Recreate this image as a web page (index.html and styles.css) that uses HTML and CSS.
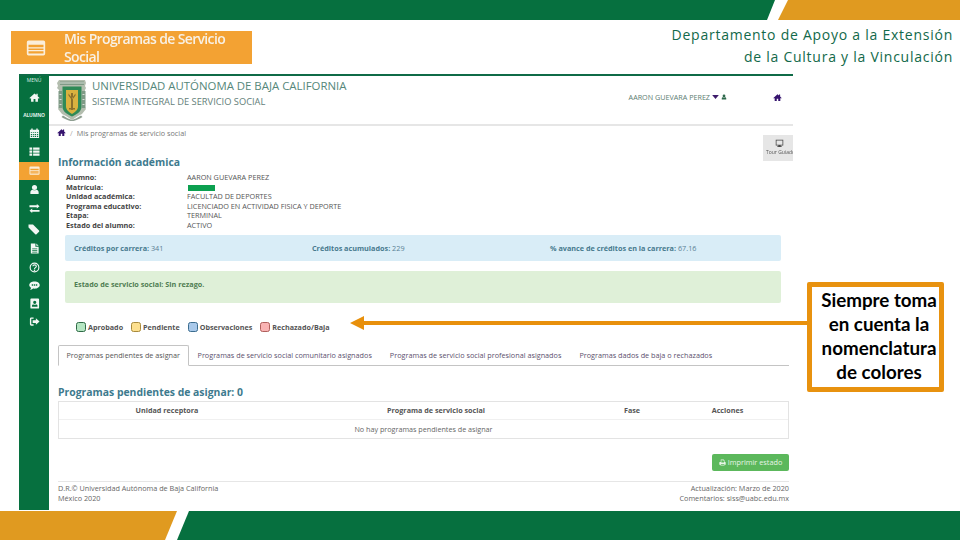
FILE: index.html
```html
<!DOCTYPE html>
<html lang="es">
<head>
<meta charset="utf-8">
<title>Mis Programas de Servicio Social</title>
<link rel="stylesheet" href="styles.css">
</head>
<body>
<svg class="defs" width="0" height="0" aria-hidden="true">
  <symbol id="i-home" viewBox="0 0 24 24"><path d="M12 3 1 13l1.5 1.6L4.500 13v8h5.500v-6h4v6h5.500v-8l2 1.600L23 13l-4-3.600V4h-3v2.700z"/></symbol>
  <symbol id="i-user" viewBox="0 0 24 24"><circle cx="12" cy="7.500" r="5.500"/><path d="M3 22v-4c0-3.500 2.500-5.500 5-5.500 2.500 1.700 5.500 1.700 8 0 2.500 0 5 2 5 5.500v4z"/></symbol>
  <symbol id="i-card" viewBox="0 0 24 24"><path fill-rule="evenodd" d="M3 3h18a2 2 0 0 1 2 2v14a2 2 0 0 1-2 2H3a2 2 0 0 1-2-2V5a2 2 0 0 1 2-2zm0 5v3h18V8zm0 4.500v2h18v-2zm0 3.500v2.500h18V16z"/></symbol>
</svg>
<div class="slide">
  <svg class="band band-top" viewBox="0 0 960 20" preserveAspectRatio="none" aria-hidden="true">
    <polygon class="fill-green" points="0,0 775,0 767,20 0,20"/>
    <polygon class="fill-gold" points="788,0 960,0 960,20 778,20"/>
  </svg>
  <header class="slide-head">
    <div class="banner">
      <svg class="banner-icon"><use href="#i-card"/></svg>
      <div class="banner-text">Mis Programas de Servicio Social</div>
    </div>
    <div class="dept">Departamento de Apoyo a la Extensión<br>de la Cultura y la Vinculación</div>
  </header>

  <section class="app">
    <nav class="side">
      <div class="side-label side-menu">MENÚ</div>
      <div class="side-home"><svg class="side-icon"><use href="#i-home"/></svg></div>
      <div class="side-label side-alumno">ALUMNO</div>
      <ul class="side-list">
        <li class="side-item"><svg class="side-icon" viewBox="0 0 24 24"><path fill-rule="evenodd" d="M5 1h3v3h8V1h3v3h3v18H2V4h3zM4 9v2h3V9zm5 0v2h2.500V9zm4 0v2h2.500V9zm4.500 0v2H20V9zM4 13v2h3v-2zm5 0v2h2.500v-2zm4 0v2h2.500v-2zm4.500 0v2H20v-2zM4 17v2.500h3V17zm5 0v2.500h2.500V17zm4 0v2.500h2.500V17zm4.500 0v2.500H20V17z"/></svg></li>
        <li class="side-item"><svg class="side-icon" viewBox="0 0 24 24"><path d="M1 3h6v5H1zm8 0h14v5H9zM1 10h6v4.500H1zm8 0h14v4.500H9zM1 16.500h6V21H1zm8 0h14V21H9z"/></svg></li>
        <li class="side-item side-active"><svg class="side-icon"><use href="#i-card"/></svg></li>
        <li class="side-item"><svg class="side-icon"><use href="#i-user"/></svg></li>
        <li class="side-item"><svg class="side-icon" viewBox="0 0 24 24"><path d="M17 2l6 5-6 5V9H1V5h16zM7 12v3h16v4H7v3l-6-5z"/></svg></li>
        <li class="side-item side-gap"><svg class="side-icon side-tag" viewBox="0 0 24 24"><path d="M1 3h9l12 12a2 2 0 0 1 0 2.500l-5 5a2 2 0 0 1-2.500 0L2.500 10.500C1.500 9.500 1 9 1 8z"/></svg></li>
        <li class="side-item"><svg class="side-icon" viewBox="0 0 24 24"><path fill-rule="evenodd" d="M4 1h10v7h7v15H4zm12 0 5 5h-5zM7 12v1.500h11V12zm0 3.500V17h11v-1.500zm0 3.500v1.500h11V19z"/></svg></li>
        <li class="side-item"><svg class="side-icon" viewBox="0 0 24 24"><circle class="ico-ring" cx="12" cy="12" r="9.500"/><path class="ico-ring" d="M8.500 9.500c0-4.500 7.500-4.500 7.500 0 0 3-4 2.500-4 5.500"/><rect x="10.500" y="16.500" width="3" height="3"/></svg></li>
        <li class="side-item side-tight"><svg class="side-icon" viewBox="0 0 24 24"><path fill-rule="evenodd" d="M12 3c6.500 0 11.500 3.500 11.500 8S18.500 19 12 19c-1 0-2 0-3-.2C7 20.500 4.500 21.500 2 21.500c1.500-1.500 2.500-3 2.700-4.700C2 15.500.5 13.500.5 11 .5 6.500 5.500 3 12 3zM6 9.500v3h3v-3zm4.500 0v3h3v-3zm4.500 0v3h3v-3z"/></svg></li>
        <li class="side-item side-tight"><svg class="side-icon" viewBox="0 0 24 24"><path fill-rule="evenodd" d="M5 1h15a2 2 0 0 1 2 2v18a2 2 0 0 1-2 2H5a2 2 0 0 1-2-2V3a2 2 0 0 1 2-2zm7.500 5a3.500 3.500 0 1 0 0 7 3.500 3.500 0 0 0 0-7zM6.500 19h12v-2c0-2-1.500-3-3-3-1.800 1-4.200 1-6 0-1.500 0-3 1-3 3z"/></svg></li>
        <li class="side-item side-tight"><svg class="side-icon" viewBox="0 0 24 24"><path d="M10 3H5a3 3 0 0 0-3 3v12a3 3 0 0 0 3 3h5v-3H5V6h5zM15 5l8 7-8 7v-4H8V9h7z"/></svg></li>
      </ul>
    </nav>

    <div class="main">
      <header class="app-head">
        <svg class="crest" viewBox="0 0 30 42" aria-hidden="true">
          <path fill="#b3bdae" d="M2 1h26l1 3-1 3 1 2-1 2v17l1 2-4 5-4 2-6 4-6-4-4-2-4-5 1-2V11L0 9l1-2-1-3z"/>
          <path fill="#7f9a86" d="M3 2.500h24V6H3zM1.500 12H5v17H1.500zM25 12h3.500v17H25z"/>
          <path fill="#d8ded6" d="M3 3.500h24v1H3zM2.500 15h2v1h-2zM2.500 20h2v1h-2zM2.500 25h2v1h-2zM25.500 15h2v1h-2zM25.500 20h2v1h-2zM25.500 25h2v1h-2z"/>
          <path fill="#2f8a57" d="M5.500 7.500h19V28c0 4.500-5 7.500-9.500 9.500C10.500 35.500 5.500 32.500 5.500 28z"/>
          <path fill="#d9b23f" d="M9 11h12v16.500c0 3.500-3 5.500-6 7.500-3-2-6-4-6-7.500z"/>
          <path fill="#8a6f2c" d="M14 14h2v17h-2zM11.500 14.500l3 4v2l-3-4zM18.500 14.500l-3 4v2l3-4zM12 29h6v1.500h-6z"/>
          <path fill="#8f9f92" d="M6 36.500c3 2 6 3.500 9 4.500 3-1 6-2.500 9-4.500l1.500 1.500c-3 2-7 3.500-10.500 4.500C11.500 41.500 7.500 40 4.500 38z"/>
        </svg>
        <div class="app-titles">
          <div class="app-title">UNIVERSIDAD AUTÓNOMA DE BAJA CALIFORNIA</div>
          <div class="app-sub">SISTEMA INTEGRAL DE SERVICIO SOCIAL</div>
        </div>
        <div class="app-user">
          <span>AARON GUEVARA PEREZ</span>
          <svg class="caret" viewBox="0 0 10 6"><path d="M0 0h10L5 6z"/></svg>
          <svg class="user-icon"><use href="#i-user"/></svg>
        </div>
        <svg class="home-purple"><use href="#i-home"/></svg>
      </header>

      <div class="crumb">
        <svg class="crumb-home"><use href="#i-home"/></svg>
        <span class="crumb-sep">/</span>
        <span>Mis programas de servicio social</span>
      </div>

      <div class="tour">
        <svg class="tour-icon" viewBox="0 0 24 24"><path fill-rule="evenodd" d="M2 2h20v15h-7v2h3v2H6v-2h3v-2H2zm2 2v11h16V4z"/></svg>
        <span class="tour-text">Tour Guiado</span>
      </div>

      <div class="content">
        <h2 class="h-info">Información académica</h2>
        <dl class="facts">
          <dt>Alumno:</dt><dd>AARON GUEVARA PEREZ</dd>
          <dt>Matrícula:</dt><dd><span class="redacted"></span></dd>
          <dt>Unidad académica:</dt><dd>FACULTAD DE DEPORTES</dd>
          <dt>Programa educativo:</dt><dd>LICENCIADO EN ACTIVIDAD FISICA Y DEPORTE</dd>
          <dt>Etapa:</dt><dd>TERMINAL</dd>
          <dt>Estado del alumno:</dt><dd>ACTIVO</dd>
        </dl>

        <div class="alert alert-info">
          <div class="credit credit-a"><b>Créditos por carrera:</b> 341</div>
          <div class="credit credit-b"><b>Créditos acumulados:</b> 229</div>
          <div class="credit"><b>% avance de créditos en la carrera:</b> 67.16</div>
        </div>
        <div class="alert alert-ok"><b>Estado de servicio social: Sin rezago.</b></div>

        <div class="legend">
          <span class="legend-item"><i class="sw sw-g"></i>Aprobado</span>
          <span class="legend-item"><i class="sw sw-y"></i>Pendiente</span>
          <span class="legend-item"><i class="sw sw-b"></i>Observaciones</span>
          <span class="legend-item"><i class="sw sw-r"></i>Rechazado/Baja</span>
        </div>

        <div class="tabs">
          <span class="tab tab-active">Programas pendientes de asignar</span>
          <span class="tab">Programas de servicio social comunitario asignados</span>
          <span class="tab">Programas de servicio social profesional asignados</span>
          <span class="tab">Programas dados de baja o rechazados</span>
        </div>

        <h2 class="h-pend">Programas pendientes de asignar: 0</h2>
        <div class="table">
          <div class="t-row t-head">
            <div>Unidad receptora</div>
            <div>Programa de servicio social</div>
            <div>Fase</div>
            <div>Acciones</div>
          </div>
          <div class="t-empty">No hay programas pendientes de asignar</div>
        </div>

        <div class="print-row">
          <span class="print-btn">
            <svg class="print-icon" viewBox="0 0 24 24"><path fill-rule="evenodd" d="M6 2h10l3 3v5h2a2 2 0 0 1 2 2v8h-4v2H5v-2H1v-8a2 2 0 0 1 2-2h3zm2 2v8h9V6h-2V4zM7 17v3h11v-3z"/></svg>Imprimir estado
          </span>
        </div>

        <footer class="foot">
          <div>D.R.© Universidad Autónoma de Baja California<br>México 2020</div>
          <div class="foot-right">Actualización: Marzo de 2020<br>Comentarios: siss@uabc.edu.mx</div>
        </footer>
      </div>
    </div>
  </section>

  <svg class="band band-bottom" viewBox="0 0 960 29" preserveAspectRatio="none" aria-hidden="true">
    <polygon class="fill-gold" points="0,0 177,0 165,29 0,29"/>
    <polygon class="fill-green" points="189,0 960,0 960,29 177,29"/>
  </svg>

  <svg class="arrow" viewBox="0 0 460 16" aria-hidden="true">
    <polygon points="0,8 14,1 14,6 460,6 460,10 14,10 14,15"/>
  </svg>
  <div class="callout">Siempre toma en cuenta la nomenclatura de colores</div>
</div>
</body>
</html>
```

FILE: styles.css
```css
* { box-sizing: border-box; }
html, body { margin: 0; padding: 0; background: #fff; }
.defs { position: absolute; }
.slide {
  position: relative;
  width: 960px;
  height: 540px;
  overflow: hidden;
  background: #fff;
  font-family: "Open Sans", sans-serif;
  display: flex;
  flex-direction: column;
}
.band { display: block; flex: none; width: 960px; }
.band-top { height: 20px; }
.band-bottom { height: 29px; margin-top: 1px; }
.fill-green { fill: #06703f; }
.fill-gold { fill: #e09a20; }

.slide-head {
  flex: none;
  height: 54px;
  display: flex;
  justify-content: space-between;
  align-items: flex-start;
  padding: 4px 7px 0 11px;
}
.banner {
  width: 241px;
  height: 33px;
  margin-top: 7px;
  background: #f3a233;
  display: flex;
  align-items: center;
  color: #fff;
  filter: blur(.3px);
}
.banner-icon { width: 20px; height: 20px; margin-left: 15px; fill: #fbeeda; flex: none; }
.banner-text { margin-left: 18px; width: 175px; font-size: 14px; font-weight: 600; line-height: 18px; letter-spacing: -.65px; color: #f8f1e6; }
.dept {
  font-size: 14px;
  line-height: 22px;
  letter-spacing: .75px;
  text-align: right;
  color: #12694a;
}

.app {
  flex: none;
  margin-left: 19px;
  width: 774px;
  height: 436px;
  border-top: 2px solid #0f6b47;
  display: flex;
  overflow: hidden;
}
.side {
  flex: none;
  width: 30px;
  background: #06703f;
  color: #fff;
  text-align: center;
}
.side-label { font-size: 5px; font-weight: 700; line-height: 9px; color: #dfeee6; }
.side-menu { height: 9px; font-weight: 400; }
.side-home { height: 24px; display: flex; align-items: center; justify-content: center; }
.side-alumno { height: 15px; line-height: 12px; letter-spacing: -.2px; }
.side-icon { width: 11px; height: 11px; fill: #f2f7f4; display: block; filter: blur(.25px); }
.side-tag { width: 12px; height: 12px; }
.ico-ring { fill: none; stroke: #f2f7f4; stroke-width: 2.500; }
.side-list { list-style: none; margin: 0; padding: 0; display: flex; flex-direction: column; gap: .9px; }
.side-item { height: 18px; display: flex; align-items: center; justify-content: center; }
.side-gap { margin-top: 2px; }
.side-tight { margin-top: -.9px; }
.side-active { background: #f3a233; }
.side-active .side-icon { fill: #fbeeda; }

.main { position: relative; flex: 1; min-width: 0; background: #fff; color: #555; filter: blur(.3px); }
.app-head {
  height: 50px;
  border-bottom: 2px solid #e6e6e6;
  display: flex;
  align-items: flex-start;
  padding: 3px 11px 0 8px;
}
.crest { width: 30px; height: 42px; flex: none; }
.app-titles { margin-left: 5px; flex: 1; }
.app-title { font-size: 11.400px; line-height: 14px; color: #55877a; white-space: nowrap; }
.app-sub { font-size: 9.300px; line-height: 12px; margin-top: 3px; color: #64807a; white-space: nowrap; }
.app-user { display: flex; align-items: center; gap: 2px; margin-top: 13px; font-size: 7.200px; line-height: 10px; color: #5d7d72; }
.caret { width: 7px; height: 4px; fill: #3d1b6b; }
.user-icon { width: 6px; height: 6px; fill: #2f6a4d; }
.home-purple { width: 9px; height: 9px; margin: 14px 0 0 46px; fill: #35136e; flex: none; }

.crumb {
  height: 13px;
  padding-left: 8px;
  display: flex;
  align-items: center;
  font-size: 7.250px;
  color: #777;
  white-space: nowrap;
}
.crumb-home { width: 9px; height: 9px; fill: #35136e; }
.crumb-sep { margin: 0 4px 0 4px; color: #aaa; }

.tour {
  position: absolute;
  top: 59px;
  right: -5px;
  width: 35px;
  height: 26px;
  background: #e6e6e6;
  display: flex;
  flex-direction: column;
  align-items: center;
  padding-top: 4px;
  font-size: 5px;
  color: #555;
}
.tour-icon { width: 9px; height: 9px; fill: #444; flex: none; margin-right: 3px; }
.tour-text { white-space: nowrap; margin-top: 1px; line-height: 7px; }

.content { padding: 0 4px 0 9px; }
.h-info, .h-pend { margin: 0; font-size: 10.400px; line-height: 14px; font-weight: 700; color: #3d7a8e; }
.h-info { margin-top: 16px; }
.facts {
  margin: 4px 0 0 8px;
  display: grid;
  grid-template-columns: 121px 1fr;
  grid-auto-rows: 9.600px;
  font-size: 7.250px;
  line-height: 9.600px;
  color: #555;
}
.facts dt { font-weight: 700; color: #444; }
.facts dd { margin: 0; }
.redacted { display: inline-block; width: 27px; height: 6px; background: #0ca050; margin-left: 1px; vertical-align: -1px; }

.alert { width: 716px; margin-left: 7px; border-radius: 2px; display: flex; align-items: center; font-size: 7.250px; padding-left: 9px; }
.alert-info { height: 26px; margin-top: 4px; background: #d9edf7; color: #5a7f95; }
.alert-info b { color: #477a8e; }
.alert-ok { height: 32px; margin-top: 10px; background: #dff0d8; color: #4f7d52; padding-bottom: 5px; }
.credit-a { width: 238px; }
.credit-b { width: 238px; }

.legend { display: flex; margin: 18px 0 0 18px; height: 12px; align-items: center; font-size: 7.200px; font-weight: 700; color: #555; gap: 8px; }
.legend-item { display: flex; align-items: center; gap: 2px; }
.sw { width: 10px; height: 10px; border-radius: 2.500px; border: 1px solid; display: block; }
.sw-g { background: #b5e6c2; border-color: #2f6b47; }
.sw-y { background: #fde08f; border-color: #a88a3c; }
.sw-b { background: #a9c9ea; border-color: #3c6d8f; }
.sw-r { background: #f9b3b3; border-color: #b0605d; }

.tabs { display: flex; margin-top: 12px; height: 21px; border-bottom: 1px solid #c4c4c4; font-size: 7.250px; color: #5b4f6e; white-space: nowrap; }
.tab { padding: 0 9px; line-height: 20px; height: 21px; }
.tab-active { border: 1px solid #c4c4c4; border-bottom-color: #fff; border-radius: 2px 2px 0 0; background: #fff; color: #555; padding: 0 7.500px; line-height: 19px; }

.h-pend { margin-top: 19px; }
.table { margin-top: 2px; border: 1px solid #e3e3e3; font-size: 7.200px; }
.t-row { display: grid; grid-template-columns: 216px 322px 70px 1fr; height: 18px; align-items: center; text-align: center; }
.t-head { font-weight: 700; color: #555; border-bottom: 1px solid #f0f0f0; }
.t-empty { height: 18px; line-height: 18px; text-align: center; color: #666; }

.print-row { display: flex; justify-content: flex-end; margin-top: 15px; }
.print-btn { display: flex; align-items: center; justify-content: center; gap: 2px; width: 77px; height: 17px; background: #5cb85c; border-radius: 2px; color: #e8f5e8; font-size: 7.300px; }
.print-icon { width: 7px; height: 7px; fill: #e8f5e8; }

.foot { display: flex; justify-content: space-between; margin-top: 10px; border-top: 1px solid #e6e6e6; padding-top: 1px; font-size: 7.250px; line-height: 10px; color: #666; }
.foot-right { text-align: right; }

.arrow { position: absolute; left: 350px; top: 315px; width: 460px; height: 16px; fill: #e8900c; }
.callout {
  position: absolute;
  left: 807px;
  top: 282px;
  width: 137px;
  height: 110px;
  border: 5px solid #e8920f;
  border-radius: 2px;
  background: #fff;
  padding: 1px 0 0 7px;
  font-family: "Lato", sans-serif;
  font-weight: 700;
  font-size: 18.800px;
  line-height: 24px;
  text-align: center;
  color: #000;
}
```
